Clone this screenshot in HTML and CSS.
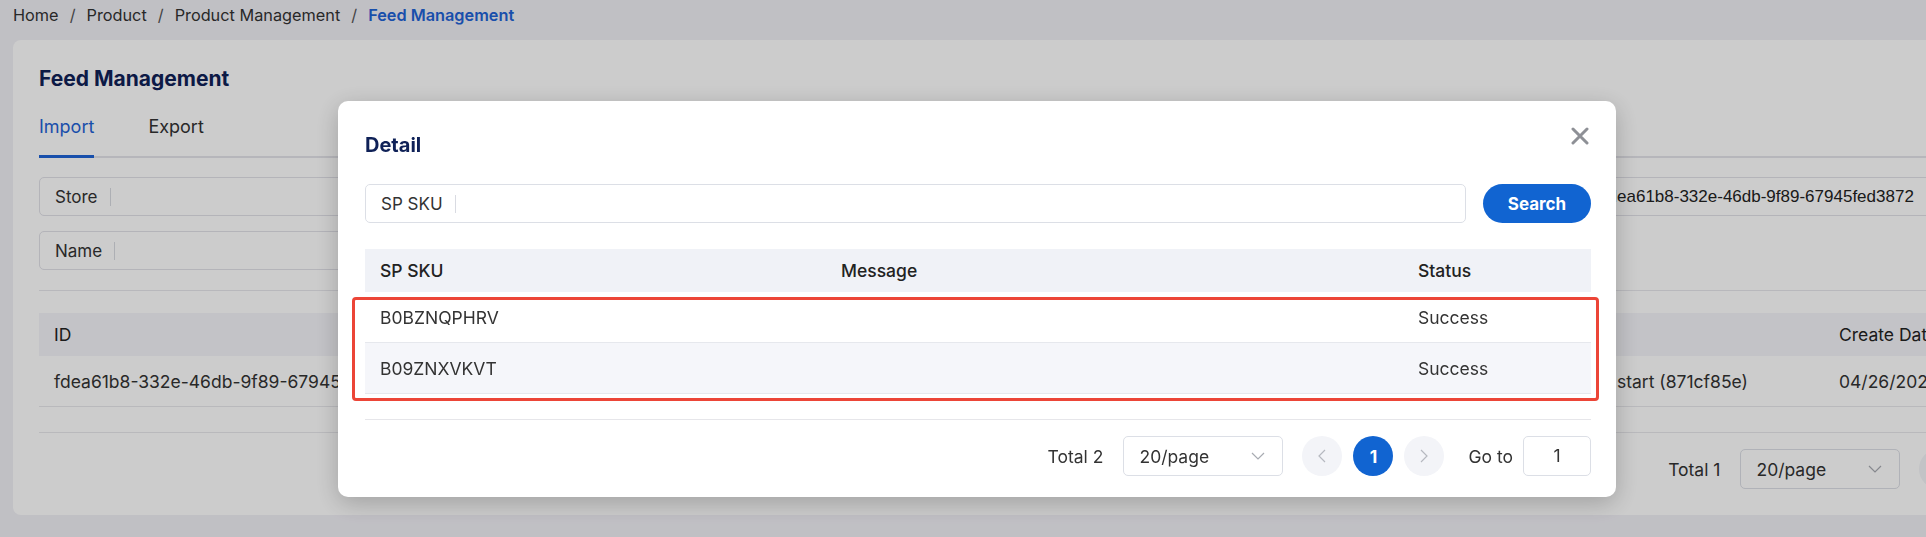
FILE: index.html
```html
<!DOCTYPE html>
<html>
<head>
    <title>Feed Management</title>
    <link rel="stylesheet" href="styles.css">
</head>
<body>
<div class="breadcrumb">
    <span class="crumb">Home</span><span class="sep">/</span>
    <span class="crumb">Product</span><span class="sep">/</span>
    <span class="crumb">Product Management</span><span class="sep">/</span>
    <span class="crumb current">Feed Management</span>
</div>
<div class="card">
    <h2 class="page-title">Feed Management</h2>
    <div class="tabs">
        <div class="tab active">Import</div>
        <div class="tab">Export</div>
    </div>
    <div class="filters">
        <div class="filter-row">
            <div class="field field-wide"><span class="field-label">Store</span><input class="field-input" type="text"></div>
            <div class="field field-wide"><span class="field-label">File Name</span><input class="field-input" type="text"></div>
            <div class="field field-grow"><span class="field-label id-label">ID</span><input class="field-input id-input" type="text" value="fdea61b8-332e-46db-9f89-67945fed3872"></div>
        </div>
        <div class="filter-row">
            <div class="field field-wide"><span class="field-label">Name</span><input class="field-input" type="text"></div>
        </div>
    </div>
    <div class="divider"></div>
    <div class="grid-table main-table">
        <div class="grid-row grid-head">
            <div class="cell">ID</div>
            <div class="cell">File Name</div>
            <div class="cell">Total</div>
            <div class="cell">Task</div>
            <div class="cell">Create Date</div>
        </div>
        <div class="grid-row">
            <div class="cell">fdea61b8-332e-46db-9f89-67945fed3872</div>
            <div class="cell">feed_import.xlsx</div>
            <div class="cell">2</div>
            <div class="cell">Feed import start (871cf85e)</div>
            <div class="cell">04/26/2024 10:21:35</div>
        </div>
    </div>
    <div class="table-foot"></div>
    <div class="pager">
        <span class="pager-total">Total 1</span>
        <div class="page-size">
            <span>20/page</span>
            <svg class="chevron" width="14" height="8" viewBox="0 0 14 8"><polyline points="1,1 7,7 13,1" fill="none" stroke="#a8abb2" stroke-width="1.2"/></svg>
        </div>
        <div class="page-nav">
            <span class="page-btn"><svg width="8" height="14" viewBox="0 0 8 14"><polyline points="7,1 1,7 7,13" fill="none" stroke="#b6b9c0" stroke-width="1.2"/></svg></span>
            <span class="page-btn active">1</span>
            <span class="page-btn"><svg width="8" height="14" viewBox="0 0 8 14"><polyline points="1,1 7,7 1,13" fill="none" stroke="#b6b9c0" stroke-width="1.2"/></svg></span>
        </div>
        <span class="pager-goto">Go to</span>
        <div class="page-jump">1</div>
    </div>
</div>

<div class="mask"></div>

<div class="modal">
    <div class="modal-header">
        <h3 class="modal-title">Detail</h3>
        <svg class="modal-close" width="18" height="18" viewBox="0 0 18 18">
            <path d="M2 2 L16 16 M16 2 L2 16" stroke="#8e9096" stroke-width="3" stroke-linecap="round"/>
        </svg>
    </div>
    <div class="search-bar">
        <div class="field field-grow"><span class="field-label">SP SKU</span><input class="field-input" type="text"></div>
        <button class="btn-search">Search</button>
    </div>
    <div class="grid-table detail-table">
        <div class="grid-row grid-head">
            <div class="cell">SP SKU</div>
            <div class="cell">Message</div>
            <div class="cell">Status</div>
        </div>
        <div class="grid-row">
            <div class="cell">B0BZNQPHRV</div>
            <div class="cell"></div>
            <div class="cell">Success</div>
        </div>
        <div class="grid-row striped">
            <div class="cell">B09ZNXVKVT</div>
            <div class="cell"></div>
            <div class="cell">Success</div>
        </div>
    </div>
    <div class="modal-foot">
        <div class="pager">
            <span class="pager-total">Total 2</span>
            <div class="page-size">
                <span>20/page</span>
                <svg class="chevron" width="14" height="8" viewBox="0 0 14 8"><polyline points="1,1 7,7 13,1" fill="none" stroke="#a8abb2" stroke-width="1.2"/></svg>
            </div>
            <div class="page-nav">
                <span class="page-btn"><svg width="8" height="14" viewBox="0 0 8 14"><polyline points="7,1 1,7 7,13" fill="none" stroke="#b6b9c0" stroke-width="1.2"/></svg></span>
                <span class="page-btn active">1</span>
                <span class="page-btn"><svg width="8" height="14" viewBox="0 0 8 14"><polyline points="1,1 7,7 1,13" fill="none" stroke="#b6b9c0" stroke-width="1.2"/></svg></span>
            </div>
            <span class="pager-goto">Go to</span>
            <div class="page-jump">1</div>
        </div>
    </div>
    <div class="highlight"></div>
</div>
</body>
</html>
```

FILE: styles.css
```css
* {
    box-sizing: border-box;
}
body {
    margin: 0;
    width: 1926px;
    height: 537px;
    overflow: hidden;
    background: #f1f0f6;
    font-family: "Inter", "Noto Sans", sans-serif;
    font-size: 17.5px;
    color: #333;
}
.breadcrumb {
    display: flex;
    align-items: center;
    height: 30px;
    padding: 0 13px;
    font-size: 16.3px;
    color: #333;
}
.sep {
    margin: 0 11px;
    color: #555;
}
.current {
    color: #1f63d6;
    font-weight: 600;
}
.card {
    margin: 10px 0 0 13px;
    width: 2221px;
    background: #fff;
    border-radius: 8px;
    padding: 24px 26px 26px;
}
.page-title {
    margin: 0;
    font-size: 21px;
    line-height: 30px;
    font-weight: 700;
    color: #0f2157;
}
.tabs {
    display: flex;
    gap: 54px;
    margin-top: 10px;
    box-shadow: inset 0 -2px 0 #e4e4ea;
}
.tab {
    padding: 11px 0 16px;
    line-height: 24px;
    font-size: 18px;
    border-bottom: 3px solid transparent;
}
.tab.active {
    color: #1f63d6;
    border-bottom-color: #1f63d6;
}
.filters {
    display: flex;
    flex-direction: column;
    gap: 15px;
    margin-top: 19px;
}
.filter-row {
    display: flex;
    gap: 16px;
}
.field {
    display: flex;
    align-items: center;
    height: 39px;
    padding: 0 15px;
    border: 1px solid #e1e1e8;
    border-radius: 5px;
    background: #fff;
}
.field-wide {
    width: 735px;
}
.field-grow {
    flex: 1;
}
.field-label {
    padding-right: 12px;
    margin-right: 12px;
    border-right: 1px solid #d9dbe2;
    line-height: 18px;
    font-size: 17px;
    color: #333;
    white-space: nowrap;
}
.id-label {
    margin-right: 16px;
}
.field-input {
    flex: 1;
    min-width: 0;
    border: none;
    outline: none;
    background: transparent;
    font-family: "Liberation Sans", Arial, sans-serif;
    font-size: 16.67px;
    color: #222;
    padding: 0;
}
.id-input {
    font-size: 17px;
}
.divider {
    height: 1px;
    margin-top: 20px;
    background: #e7e7ec;
}
.grid-table {
    display: flex;
    flex-direction: column;
}
.main-table {
    margin-top: 22px;
}
.grid-row {
    display: grid;
    height: 51px;
    align-items: center;
    border-bottom: 1px solid #e8e8ec;
}
.main-table .grid-row {
    grid-template-columns: 520px 500px 439px 326px 1fr;
}
.grid-head {
    height: 43px;
    border-bottom: none;
    background: #f4f4f9;
    color: #222;
}
.cell {
    padding: 0 15px;
    white-space: nowrap;
    overflow: hidden;
}
.table-foot {
    height: 26px;
    border-bottom: 1px solid #e8e8ec;
}
.pager {
    display: flex;
    align-items: center;
    justify-content: flex-end;
    margin-top: 16px;
}
.pager-total {
    margin-right: 20px;
}
.page-size {
    display: flex;
    align-items: center;
    justify-content: space-between;
    width: 160px;
    height: 40px;
    padding: 0 17px 0 15px;
    border: 1px solid #dcdfe6;
    border-radius: 5px;
    background: #fff;
}
.page-nav {
    display: flex;
    gap: 11px;
    margin: 0 24px 0 19px;
}
.page-btn {
    display: flex;
    align-items: center;
    justify-content: center;
    width: 40px;
    height: 40px;
    border-radius: 50%;
    background: #f3f4f8;
}
.page-btn.active {
    background: #1164d1;
    color: #fff;
    font-weight: 700;
}
.pager-goto {
    margin-right: 10px;
}
.page-jump {
    width: 68px;
    height: 40px;
    line-height: 38px;
    text-align: center;
    border: 1px solid #dcdfe6;
    border-radius: 5px;
    background: #fff;
}
.mask {
    position: fixed;
    inset: 0;
    background: rgba(0, 0, 0, 0.2);
}
.modal {
    position: fixed;
    left: 338px;
    top: 101px;
    width: 1278px;
    padding: 26px 25px 21px 27px;
    background: #fff;
    border-radius: 10px;
    box-shadow: 0 6px 24px rgba(0, 0, 0, 0.22);
}
.modal-header {
    display: flex;
    justify-content: space-between;
    align-items: flex-start;
}
.modal-title {
    margin: 0;
    font-size: 20px;
    line-height: 36px;
    font-weight: 700;
    color: #0f2157;
}
.modal-close {
    margin-right: 2px;
}
.search-bar {
    display: flex;
    gap: 17px;
    margin-top: 21px;
}
.search-bar .field {
    border-color: #dcdfe6;
}
.btn-search {
    width: 108px;
    height: 39px;
    border: none;
    border-radius: 20px;
    background: #1164d1;
    color: #fff;
    font-family: "Inter", "Noto Sans", sans-serif;
    font-size: 17px;
    font-weight: 700;
}
.detail-table {
    margin-top: 26px;
}
.detail-table .grid-row {
    grid-template-columns: 461px 577px 1fr;
    border-bottom-color: #e6e8ed;
}
.detail-table .grid-head {
    background: #f0f2f7;
    font-weight: 500;
}
.striped {
    background: #f5f6fa;
}
.modal-foot {
    margin-top: 25px;
    border-top: 1px solid #e6e6ea;
}
.highlight {
    position: absolute;
    left: 14px;
    top: 196px;
    width: 1247px;
    height: 104px;
    border: 3px solid #ec4537;
    border-radius: 4px;
}
```
